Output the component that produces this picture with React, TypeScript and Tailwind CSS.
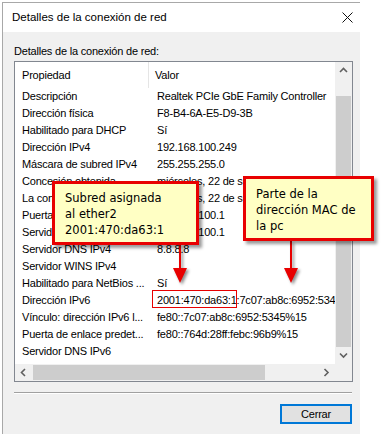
import React from 'react';

const rows: [string, string][] = [
  ['Descripción', 'Realtek PCIe GbE Family Controller'],
  ['Dirección física', 'F8-B4-6A-E5-D9-3B'],
  ['Habilitado para DHCP', 'Sí'],
  ['Dirección IPv4', '192.168.100.249'],
  ['Máscara de subred IPv4', '255.255.255.0'],
  ['Concesión obtenida', 'miércoles, 22 de septiembre de 2021 9:47:58'],
  ['La concesión expira', 'miércoles, 22 de septiembre de 2021 11:47:58'],
  ['Puerta de enlace predet...', '192.168.100.1'],
  ['Servidor DHCP IPv4', '192.168.100.1'],
  ['Servidor DNS IPv4', '8.8.8.8'],
  ['Servidor WINS IPv4', ''],
  ['Habilitado para NetBios ...', 'Sí'],
  ['Dirección IPv6', '2001:470:da63:1:7c07:ab8c:6952:5345'],
  ['Vínculo: dirección IPv6 l...', 'fe80::7c07:ab8c:6952:5345%15'],
  ['Puerta de enlace predet...', 'fe80::764d:28ff:febc:96b9%15'],
  ['Servidor DNS IPv6', ''],
];

const Chevron = ({ dir }: { dir: 'up' | 'down' | 'left' | 'right' }) => {
  const pts = {
    up: '1,5 4.5,1.5 8,5',
    down: '1,1.5 4.5,5 8,1.5',
    left: '5,1 1.5,4.5 5,8',
    right: '1.5,1 5,4.5 1.5,8',
  }[dir];
  const horiz = dir === 'up' || dir === 'down';
  return (
    <svg width={horiz ? 9 : 7} height={horiz ? 7 : 9} viewBox={horiz ? '0 0 9 7' : '0 0 7 9'}>
      <polyline points={pts} fill="none" stroke="#606060" strokeWidth="1.6" />
    </svg>
  );
};

const Arrow = ({ x, y1 }: { x: number; y1: number }) => (
  <svg
    className="absolute drop-shadow-[2px_2px_1.5px_rgba(0,0,0,0.45)]"
    style={{ left: x - 8, top: y1 }}
    width="16"
    height={284 - y1}
  >
    <line x1="8" y1="0" x2="8" y2={270 - y1} stroke="#e80000" strokeWidth="2" />
    <polygon points={`1,${268 - y1} 15,${268 - y1} 8,${283 - y1}`} fill="#e80000" />
  </svg>
);

export default function App() {
  return (
    <div className="relative w-[387px] h-[434px] bg-white overflow-hidden font-['Liberation_Sans',Arial,sans-serif] text-black">
      <div className="ml-[2px] mt-[2px] w-[358px] h-[432px] border-l border-t border-[#a8a8a8] flex flex-col">
        {/* title bar */}
        <div className="h-[29px] bg-white flex items-center justify-between pl-[9px] pr-[7px]">
          <span className="text-[11.5px]">Detalles de la conexión de red</span>
          <svg width="11" height="11" viewBox="0 0 11 11">
            <path d="M0.5 0.5 L10.5 10.5 M10.5 0.5 L0.5 10.5" stroke="#111" strokeWidth="1" />
          </svg>
        </div>

        {/* body */}
        <div className="flex-1 bg-[#f0f0f0] pl-[11px] pr-[6px] pt-[12px] text-[11px] tracking-[-0.2px]">
          <div className="h-[15px] leading-[15px] mb-[2px]">Detalles de la conexión de red:</div>

          <div className="w-[339px] h-[321px] border border-[#828790] bg-white flex flex-col">
            <div className="h-[302px] flex">
              <div className="w-[320px] overflow-hidden">
                <div className="h-[26px] flex items-center">
                  <div className="w-[134px] h-full pl-[7px] flex items-center border-r border-[#e5e5e5]">Propiedad</div>
                  <div className="pl-[6px]">Valor</div>
                </div>
                {rows.map(([k, v], i) => (
                  <div key={i} className="h-[17px] leading-[17px] flex whitespace-nowrap">
                    <div className="w-[135px] shrink-0 pl-[7px] overflow-hidden">{k}</div>
                    <div className="pl-[7px]">{v}</div>
                  </div>
                ))}
              </div>
              <div className="w-[17px] bg-[#f0f0f0] flex flex-col">
                <div className="h-[17px] flex items-center justify-center">
                  <Chevron dir="up" />
                </div>
                <div className="h-[251px] mt-[17px] mx-[1px] bg-[#cdcdcd]" />
                <div className="h-[17px] flex items-center justify-center">
                  <Chevron dir="down" />
                </div>
              </div>
            </div>
            <div className="h-[17px] flex bg-[#f0f0f0]">
              <div className="w-[17px] flex items-center justify-center">
                <Chevron dir="left" />
              </div>
              <div className="w-[232px] my-[1px] ml-[1px] bg-[#cdcdcd]" />
              <div className="flex-1" />
              <div className="w-[17px] flex items-center justify-center">
                <Chevron dir="right" />
              </div>
              <div className="w-[17px]" />
            </div>
          </div>

          <div className="w-[338px] mt-[10px] h-[1px] bg-[#a0a0a0]" />
          <div className="w-[338px] h-[1px] bg-white" />

          <div className="w-[338px] mt-[10px] flex justify-end">
            <button className="w-[72px] h-[20px] border-2 border-[#0078d7] bg-[#e1e1e1] text-[11px] flex items-center justify-center">
              Cerrar
            </button>
          </div>
        </div>
      </div>

      {/* annotations */}
      <div className="absolute left-[152px] top-[290px] w-[85px] h-[18px] border-[1.5px] border-[#e80000]" />

      <Arrow x={180} y1={245} />
      <Arrow x={291} y1={241} />

      <div className="absolute left-[52px] top-[181px] w-[147px] h-[64px] border-[3px] border-[#e80000] bg-[#ffffc4] shadow-[3px_3px_3px_rgba(0,0,0,0.4)] pl-[10px] pt-[6px] font-['DejaVu_Sans',Verdana,sans-serif] text-[11.5px] leading-[16px]">
        <div>Subred asignada</div>
        <div>al ether2</div>
        <div>2001:470:da63:1</div>
      </div>

      <div className="absolute left-[243px] top-[176px] w-[131px] h-[65px] border-[3px] border-[#e80000] bg-[#ffffc4] shadow-[3px_3px_3px_rgba(0,0,0,0.4)] pl-[10px] pt-[7px] font-['DejaVu_Sans',Verdana,sans-serif] text-[11.5px] leading-[16px]">
        <div>Parte de la</div>
        <div>dirección MAC de</div>
        <div>la pc</div>
      </div>
    </div>
  );
}
